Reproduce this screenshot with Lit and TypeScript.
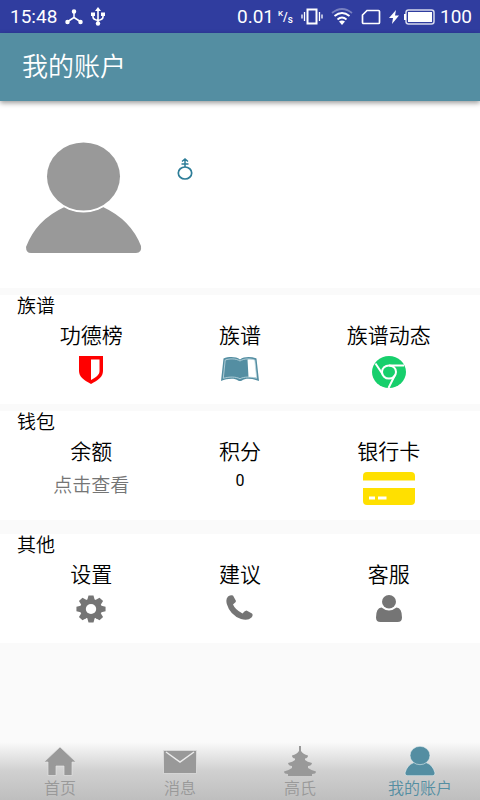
import { LitElement, html, css, svg } from "lit";
import { customElement, property } from "lit/decorators.js";

const icons: Record<string, unknown> = {
  shield: html`<svg width="26" height="28" viewBox="0 0 26 28">
    <path fill="#f00" d="M1 0H25V15C25 21 20 24 13 28C6 24 1 21 1 15Z" />
    <path fill="#fff" d="M13 3.500H21.500V15C21.500 19 18 21 13 24Z" />
  </svg>`,
  book: html`<svg width="38" height="26" viewBox="0 0 38 26">
    <path fill="#548ea2" d="M2.500 2.500C8 .5 15 .5 19 3.500C23 .5 30 .5 35.500 2.500L38 25C32 22.500 24 22 21 24.500Q19 25.500 17 24.500C14 22 6 22.500 0 25Z" />
    <path fill="#fff" d="M26.500 3.500C29 3 31.500 3.400 33.800 4.200L35.700 22C33 21.200 30 20.800 27.500 21Z" />
    <path fill="none" stroke="#c3dae2" stroke-width=".8" d="M4.200 4C9 2.400 15 2.400 19 5C23 2.400 29 2.400 33.800 4L35.700 22.300C30 20.700 23 20.500 19 22.800C15 20.500 8 20.700 2.300 22.300Z" />
  </svg>`,
  chrome: html`<svg width="34" height="32" viewBox="0 0 34 32">
    <ellipse cx="17" cy="16" rx="17" ry="16" fill="#17cf6c" />
    <g fill="none" stroke="#fff" stroke-width="2">
      <ellipse cx="17" cy="16" rx="7" ry="6.600" />
      <path d="M17 9.400H32M10.500 18L3.500 7.500M23 19L16.500 32" />
    </g>
  </svg>`,
  card: html`<svg width="52" height="33" viewBox="0 0 52 33">
    <path fill="#ffe000" d="M4 0H48Q52 0 52 4V8.500H0V4Q0 0 4 0ZM0 16H52V29Q52 33 48 33H4Q0 33 0 29Z" />
    <path fill="#fff" d="M6 24.500H12V27.500H6ZM15 24.500H23.500V27.500H15Z" />
  </svg>`,
  gear: html`<svg width="30" height="28" viewBox="0 0 30 28">
    <g fill="#757575">
      <ellipse cx="15" cy="14" rx="11" ry="10" />
      ${[0, 45, 90, 135].map(
        (a) => svg`<path transform="translate(15 14) scale(1.040 .97) rotate(${a})" d="M-3.400-10L-2.400-14H2.400L3.400-10V10L2.400 14H-2.400L-3.400 10Z" />`
      )}
    </g>
    <ellipse cx="15" cy="14" rx="5.200" ry="4.900" fill="#fff" />
  </svg>`,
  phone: html`<svg width="27" height="25" viewBox="0 0 27 25">
    <path fill="#757575" d="M2 1.500Q5-.5 7 .5L10 6Q10 7 7 9.500Q9 14.500 16.500 18.500Q19 15.500 20.500 15.500L26 18.500Q27.500 20 25.500 22.500Q22 26 15 24Q4 20 .8 9Q-.5 4 2 1.500Z" />
  </svg>`,
  agent: html`<svg width="26" height="28" viewBox="0 0 26 28">
    <g fill="#757575">
      <ellipse cx="13" cy="6.700" rx="7" ry="6.700" />
      <path d="M5.500 12.500Q13 18.500 20.500 12.500Q26 13 26 22.500Q26 27 21.500 27H4.500Q0 27 0 22.500Q0 13 5.500 12.500Z" />
    </g>
  </svg>`,
  home: html`<svg width="34" height="30" viewBox="0 0 34 30">
    <path fill="#999" stroke="#e4e4e4" stroke-width=".7" d="M17 1L33 16H29V29.500H21V20H13V29.500H5V16H1Z" />
  </svg>`,
  mail: html`<svg width="34" height="30" viewBox="0 0 34 30">
    <path fill="#999" stroke="#e4e4e4" stroke-width=".7" d="M.5 4.500H33.500V27.500H.5Z" />
    <path fill="none" stroke="#ececec" stroke-width="1.500" d="M3 6L17 16L31 6" />
  </svg>`,
  tower: html`<svg width="34" height="30" viewBox="0 0 34 30">
    <path fill="#999" d="M16 0H18V5Q20 8 25 9.500Q25 12 22 12.500V14Q24 16 29 17Q28.500 20 25 20V22Q28 24 33 25.500Q33 28 29 28V30H5V28Q1 28 1 25.500Q6 24 9 22V20Q5.500 20 5 17Q10 16 12 14V12.500Q9 12 9 9.500Q14 8 16 5Z" />
  </svg>`,
  me: html`<svg width="34" height="30" viewBox="0 0 34 30">
    <g fill="#548ea2" stroke="#e6eef0" stroke-width=".6">
      <path d="M11 16.500H23Q30 19 32 27Q32 29.700 30 29.700H4Q2 29.700 2 27Q4 19 11 16.500Z" />
      <ellipse cx="17" cy="9.500" rx="10" ry="9.200" />
    </g>
  </svg>`,
};

interface Entry {
  label: string;
  icon?: string;
  value?: string;
  muted?: boolean;
}

@customElement("account-section")
class AccountSection extends LitElement {
  @property() heading = "";
  @property({ attribute: false }) entries: Entry[] = [];

  static styles = css`
    :host {
      display: block;
      background: #fff;
      padding: 0 17px;
      box-sizing: border-box;
      min-height: 109px;
    }
    h2 {
      margin: 0;
      font-size: 19px;
      line-height: 20px;
      font-weight: inherit;
    }
    .grid {
      display: grid;
      grid-template-columns: repeat(3, 1fr);
      padding-top: 4px;
    }
    button {
      display: flex;
      flex-direction: column;
      align-items: center;
      border: 0;
      padding: 0;
      background: none;
      color: #000;
      font: inherit;
      cursor: pointer;
    }
    .label {
      font-size: 21px;
      line-height: 30px;
    }
    .body {
      padding-top: 7px;
    }
    .body svg {
      display: block;
    }
    .value {
      font: 16px/20px Roboto, sans-serif;
      padding-top: 6px;
    }
    .muted {
      font-size: 19px;
      line-height: 24px;
      padding-top: 7px;
      color: #757575;
    }
  `;

  render() {
    return html`<h2>${this.heading}</h2>
      <div class="grid">
        ${this.entries.map(
          (e) => html`<button type="button">
            <span class="label">${e.label}</span>
            ${e.icon
              ? html`<span class="body">${icons[e.icon]}</span>`
              : html`<span class=${e.muted ? "muted" : "value"}>${e.value}</span>`}
          </button>`
        )}
      </div>`;
  }
}

@customElement("app-root")
class AppRoot extends LitElement {
  static styles = css`
    :host {
      display: flex;
      flex-direction: column;
      min-height: 100vh;
      background: #fafafa;
      color: #000;
      font-family: "Noto Sans CJK SC", sans-serif;
      font-weight: 350;
    }
    svg {
      display: block;
    }
    .status {
      display: flex;
      align-items: center;
      justify-content: space-between;
      height: 33px;
      padding: 0 8px 0 10px;
      background: #303d9f;
      color: #fff;
      font: 19px/32px Roboto, sans-serif;
      box-sizing: border-box;
    }
    .group {
      display: flex;
      align-items: center;
      gap: 8px;
    }
    .power {
      display: flex;
      align-items: center;
      gap: 5px;
    }
    .rate {
      display: flex;
      align-items: center;
      gap: 4px;
    }
    .unit {
      display: flex;
      height: 14px;
      font-size: 8px;
      line-height: 8px;
      font-weight: 500;
    }
    .slash {
      font-size: 12px;
      line-height: 14px;
    }
    .low {
      align-self: flex-end;
      font-size: 10px;
    }
    .bar {
      background: #548ea2;
      color: #fff;
      padding: 13px 22px 17px;
      box-shadow: 0 2px 5px rgba(0, 0, 0, 0.4);
      z-index: 1;
    }
    h1 {
      margin: 0;
      font-size: 26px;
      line-height: 38px;
      font-weight: inherit;
    }
    .profile {
      display: flex;
      align-items: flex-start;
      gap: 34px;
      padding: 40px 25px 34px;
      background: #fff;
    }
    .gender {
      margin-top: 16px;
    }
    .sections {
      display: flex;
      flex-direction: column;
      gap: 7px;
      padding: 7px 0;
    }
    .last {
      margin-top: 7px;
    }
    nav {
      display: grid;
      grid-template-columns: repeat(4, 1fr);
      margin-top: auto;
      padding: 4px 0 2px;
      background: linear-gradient(#fafafa, #d0d0d0 50%, #bebebe);
    }
    nav a {
      display: flex;
      flex-direction: column;
      align-items: center;
      color: #999;
      font-size: 16px;
      line-height: 22px;
      text-decoration: none;
    }
    nav a.active {
      color: #548ea2;
    }
  `;

  private sections: { heading: string; entries: Entry[] }[] = [
    {
      heading: "族谱",
      entries: [
        { label: "功德榜", icon: "shield" },
        { label: "族谱", icon: "book" },
        { label: "族谱动态", icon: "chrome" },
      ],
    },
    {
      heading: "钱包",
      entries: [
        { label: "余额", value: "点击查看", muted: true },
        { label: "积分", value: "0" },
        { label: "银行卡", icon: "card" },
      ],
    },
    {
      heading: "其他",
      entries: [
        { label: "设置", icon: "gear" },
        { label: "建议", icon: "phone" },
        { label: "客服", icon: "agent" },
      ],
    },
  ];

  private tabs = [
    { label: "首页", icon: "home" },
    { label: "消息", icon: "mail" },
    { label: "高氏", icon: "tower" },
    { label: "我的账户", icon: "me", active: true },
  ];

  render() {
    return html`
      <div class="status">
        <div class="group">
          <span>15:48</span>
          <svg width="18" height="16" viewBox="0 0 18 16">
            <g fill="#fff" stroke="#fff" stroke-width="1.500">
              <path d="M9 2V8.500L2 13M9 8.500L16 13" fill="none" />
              <circle cx="9" cy="2.500" r="1.500" /><circle cx="2.500" cy="13" r="1.500" /><circle cx="15.500" cy="13" r="1.500" />
            </g>
          </svg>
          <svg width="14" height="19" viewBox="0 0 14 19">
            <path fill="none" stroke="#fff" stroke-width="1.600" d="M7 2V16M2 7V10Q2 12.500 7 13.500Q12 12.500 12 10V7" />
            <path fill="#fff" d="M7 0L10 4H4ZM0 5.500H4V9H0ZM10 5.500H14V9H10Z" />
            <circle cx="7" cy="16.500" r="2.200" fill="#fff" />
          </svg>
        </div>
        <div class="group">
          <span class="rate">
            <span>0.01</span>
            <span class="unit"><span>K</span><span class="slash">/</span><span class="low">s</span></span>
          </span>
          <svg width="22" height="17" viewBox="0 0 22 17">
            <path fill="none" stroke="#fff" stroke-width="2" d="M6.500 1.500H15.500V15.500H6.500Z" />
            <path stroke="#fff" stroke-width="1.300" d="M3.500 4V13M1 6.500V10.500M18.500 4V13M21 6.500V10.500" />
          </svg>
          <svg width="22" height="17" viewBox="0 0 22 17">
            <g fill="none" stroke="#fff" stroke-width="1.800">
              <path opacity=".35" d="M1 5Q11-3 21 5" />
              <path d="M3.500 8Q11 2 18.500 8M6.500 11.500Q11 7.500 15.500 11.500" />
            </g>
            <path fill="#fff" d="M8 13.500Q11 11.500 14 13.500L11 17Z" />
          </svg>
          <svg width="20" height="16" viewBox="0 0 20 16">
            <path fill="none" stroke="#fff" stroke-width="1.700" d="M6 1.500H17.500Q18.500 1.500 18.500 2.500V13.500Q18.500 14.500 17.500 14.500H2.500Q1.500 14.500 1.500 13.500V6Z" />
          </svg>
          <div class="power">
            <svg width="10" height="16" viewBox="0 0 10 16"><path fill="#fff" d="M7 1L0 9H4L3 15L10 6.500H6Z" /></svg>
            <svg width="31" height="16" viewBox="0 0 31 16">
              <rect x="2" y="1" width="28" height="14" rx="2.500" fill="none" stroke="#d5d8ec" stroke-width="1.500" />
              <path fill="#fff" d="M4 3H28V13H4ZM0 5H2V11H0Z" />
            </svg>
            <span>100</span>
          </div>
        </div>
      </div>
      <header class="bar"><h1>我的账户</h1></header>
      <main>
        <div class="profile">
          <svg width="118" height="113" viewBox="0 0 118 113">
            <g fill="#999">
              <path d="M39.500 66Q58 76 78 66Q106 79 116 105Q117 112 111 112H6Q1 112 1 106Q11 79 39.500 66Z" />
              <ellipse cx="58.500" cy="35" rx="38.500" ry="36.500" fill="#fff" />
              <ellipse cx="58.500" cy="35.500" rx="36.500" ry="34" />
            </g>
          </svg>
          <svg class="gender" width="16" height="24" viewBox="0 0 16 24">
            <g fill="none" stroke="#2d7d98" stroke-width="1.700">
              <ellipse cx="8" cy="16" rx="6.700" ry="6" />
              <path stroke-width="1.500" d="M8 10V2M5 4.500L8 2L11 4.500M4.500 7H11.500" />
            </g>
          </svg>
        </div>
        <div class="sections">
          ${this.sections.map(
            (s, i) => html`<account-section
              class=${i === 2 ? "last" : ""}
              .heading=${s.heading}
              .entries=${s.entries}
            ></account-section>`
          )}
        </div>
      </main>
      <nav>
        ${this.tabs.map(
          (t) => html`<a href="#" class=${t.active ? "active" : ""}>${icons[t.icon]}<span>${t.label}</span></a>`
        )}
      </nav>
    `;
  }
}
